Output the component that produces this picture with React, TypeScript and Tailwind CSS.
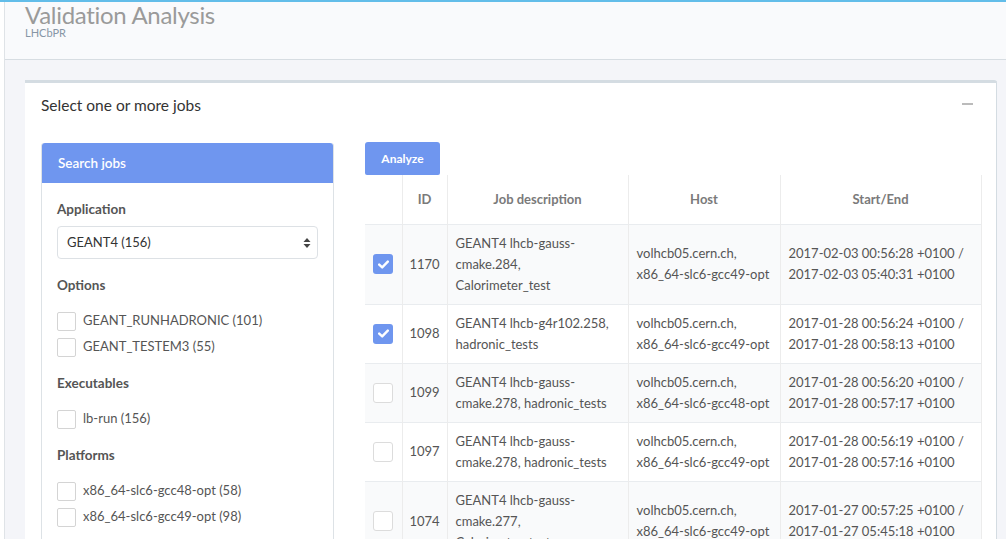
import React from "react";

type Job = {
  id: string;
  desc: string[];
  host: string[];
  dates: string[];
  checked: boolean;
};

const jobs: Job[] = [
  {
    id: "1170",
    desc: ["GEANT4 lhcb-gauss-", "cmake.284,", "Calorimeter_test"],
    host: ["volhcb05.cern.ch,", "x86_64-slc6-gcc49-opt"],
    dates: ["2017-02-03 00:56:28 +0100 /", "2017-02-03 05:40:31 +0100"],
    checked: true,
  },
  {
    id: "1098",
    desc: ["GEANT4 lhcb-g4r102.258,", "hadronic_tests"],
    host: ["volhcb05.cern.ch,", "x86_64-slc6-gcc49-opt"],
    dates: ["2017-01-28 00:56:24 +0100 /", "2017-01-28 00:58:13 +0100"],
    checked: true,
  },
  {
    id: "1099",
    desc: ["GEANT4 lhcb-gauss-", "cmake.278, hadronic_tests"],
    host: ["volhcb05.cern.ch,", "x86_64-slc6-gcc48-opt"],
    dates: ["2017-01-28 00:56:20 +0100 /", "2017-01-28 00:57:17 +0100"],
    checked: false,
  },
  {
    id: "1097",
    desc: ["GEANT4 lhcb-gauss-", "cmake.278, hadronic_tests"],
    host: ["volhcb05.cern.ch,", "x86_64-slc6-gcc49-opt"],
    dates: ["2017-01-28 00:56:19 +0100 /", "2017-01-28 00:57:16 +0100"],
    checked: false,
  },
  {
    id: "1074",
    desc: ["GEANT4 lhcb-gauss-", "cmake.277,", "Calorimeter_test"],
    host: ["volhcb05.cern.ch,", "x86_64-slc6-gcc49-opt"],
    dates: ["2017-01-27 00:57:25 +0100 /", "2017-01-27 05:45:18 +0100"],
    checked: false,
  },
];

function Lines({ lines }: { lines: string[] }) {
  return (
    <>
      {lines.map((l, i) => (
        <div key={i}>{l}</div>
      ))}
    </>
  );
}

function CheckBox({ checked }: { checked?: boolean }) {
  if (checked) {
    return (
      <div className="w-[20px] h-[20px] rounded-[3px] bg-[#6f96ef] flex items-center justify-center">
        <svg width="11" height="9" viewBox="0 0 11 9">
          <path d="M1.2 4.6 L4.2 7.4 L9.8 1.6" fill="none" stroke="#fff" strokeWidth="2.4" strokeLinecap="round" strokeLinejoin="round" />
        </svg>
      </div>
    );
  }
  return <div className="w-[20px] h-[20px] rounded-[3px] border border-[#dcdcdc] bg-white" />;
}

function Option({ label }: { label: string }) {
  return (
    <div className="flex items-center gap-[7px] h-[26px]">
      <div className="w-[19px] h-[19px] rounded-[2px] border border-[#d4d4d4] bg-white" />
      <span>{label}</span>
    </div>
  );
}

function Heading({ children }: { children: React.ReactNode }) {
  return <div className="font-bold text-[13.5px] leading-[20px] text-[#555] mt-[16px]">{children}</div>;
}

function App() {
  return (
    <div
      className="w-[1006px] h-[539px] overflow-hidden bg-white text-[#555] flex flex-col"
      style={{ fontFamily: "Lato, 'Open Sans', sans-serif" }}
    >
      <div className="h-[2px] bg-[#62bde9] shrink-0" />
      <div className="flex flex-1 min-h-0">
        <div className="w-[5px] bg-white border-r border-[#dfe3e7] shrink-0" />
        <div className="flex-1 flex flex-col min-w-0">
          <div className="h-[58px] bg-[#f9fafc] border-b border-[#d7dde2] pl-[20px] shrink-0">
            <div className="text-[24px] leading-[25px] text-[#9a9a9a] tracking-[-0.3px]">Validation Analysis</div>
            <div className="text-[11px] leading-[12px] text-[#8796a6]">LHCbPR</div>
          </div>
          <div className="flex-1 bg-[#f4f5f9] pl-[20px] pr-[9px] pt-[20px] min-h-0">
            <div className="bg-white border-t-[3px] border-r border-[#d4dce2] rounded-tr-[3px] h-full">
              <div className="h-[45px] flex items-center justify-between pl-[16px] pr-[23px]">
                <span className="text-[15.5px] text-[#333]">Select one or more jobs</span>
                <div className="w-[11px] h-[2px] bg-[#bbb] -mt-[4px]" />
              </div>
              <div className="flex pl-[16px] pt-[15px] gap-[31px]">
                <div className="w-[293px] shrink-0 border border-[#dde2e6] border-t-0 rounded-t-[3px] text-[13px] h-[400px]">
                  <div className="h-[40px] bg-[#6f96ef] rounded-t-[3px] flex items-center pl-[16px] text-white text-[13.5px] font-semibold">
                    Search jobs
                  </div>
                  <div className="px-[15px]">
                    <Heading>Application</Heading>
                    <div className="mt-[7px] h-[33px] border border-[#dde1e5] rounded-[4px] flex items-center justify-between pl-[9px] pr-[6px] text-[#333]">
                      <span>GEANT4 (156)</span>
                      <svg width="8" height="12" viewBox="0 0 8 12">
                        <path d="M4 1 L7.5 5 L0.5 5 Z M4 11 L7.5 7 L0.5 7 Z" fill="#444" />
                      </svg>
                    </div>
                    <Heading>Options</Heading>
                    <div className="mt-[13px]">
                      <Option label="GEANT_RUNHADRONIC (101)" />
                      <Option label="GEANT_TESTEM3 (55)" />
                    </div>
                    <div className="-mt-[3px]">
                      <Heading>Executables</Heading>
                    </div>
                    <div className="mt-[13px]">
                      <Option label="lb-run (156)" />
                    </div>
                    <div className="-mt-[3px]">
                      <Heading>Platforms</Heading>
                    </div>
                    <div className="mt-[13px]">
                      <Option label="x86_64-slc6-gcc48-opt (58)" />
                      <Option label="x86_64-slc6-gcc49-opt (98)" />
                    </div>
                  </div>
                </div>
                <div className="w-[616px] shrink-0 -mt-[1px]">
                  <button className="h-[33px] w-[75px] bg-[#6f96ef] text-white text-[12px] font-bold rounded-t-[3px] rounded-b-[2px]">
                    Analyze
                  </button>
                  <table className="w-full table-fixed border-collapse text-[13px] leading-[21px]">
                    <colgroup>
                      <col className="w-[37px]" />
                      <col className="w-[45px]" />
                      <col className="w-[181px]" />
                      <col className="w-[152px]" />
                      <col className="w-[201px]" />
                    </colgroup>
                    <thead>
                      <tr className="h-[49px] text-[#7a7a7a]">
                        <th className="border-r border-[#ececec]" />
                        <th className="border-r border-[#ececec] font-bold">ID</th>
                        <th className="border-r border-[#ececec] font-bold">Job description</th>
                        <th className="border-r border-[#ececec] font-bold">Host</th>
                        <th className="border-r border-[#ececec] font-bold">Start/End</th>
                      </tr>
                    </thead>
                    <tbody>
                      {jobs.map((j, i) => (
                        <tr key={j.id} className={`border-t border-[#e9ecef] ${i % 2 === 0 ? "bg-[#f9fafb]" : "bg-white"}`}>
                          <td className="border-r border-[#ececec] px-[8px] py-[8px] align-middle">
                            <CheckBox checked={j.checked} />
                          </td>
                          <td className="border-r border-[#ececec] px-[6px] align-middle text-center">{j.id}</td>
                          <td className="border-r border-[#ececec] px-[8px] py-[8px] align-middle whitespace-nowrap">
                            <Lines lines={j.desc} />
                          </td>
                          <td className="border-r border-[#ececec] px-[8px] align-middle whitespace-nowrap">
                            <Lines lines={j.host} />
                          </td>
                          <td className="border-r border-[#ececec] px-[8px] align-middle whitespace-nowrap">
                            <Lines lines={j.dates} />
                          </td>
                        </tr>
                      ))}
                    </tbody>
                  </table>
                </div>
              </div>
            </div>
          </div>
        </div>
      </div>
    </div>
  );
}

export default App;
